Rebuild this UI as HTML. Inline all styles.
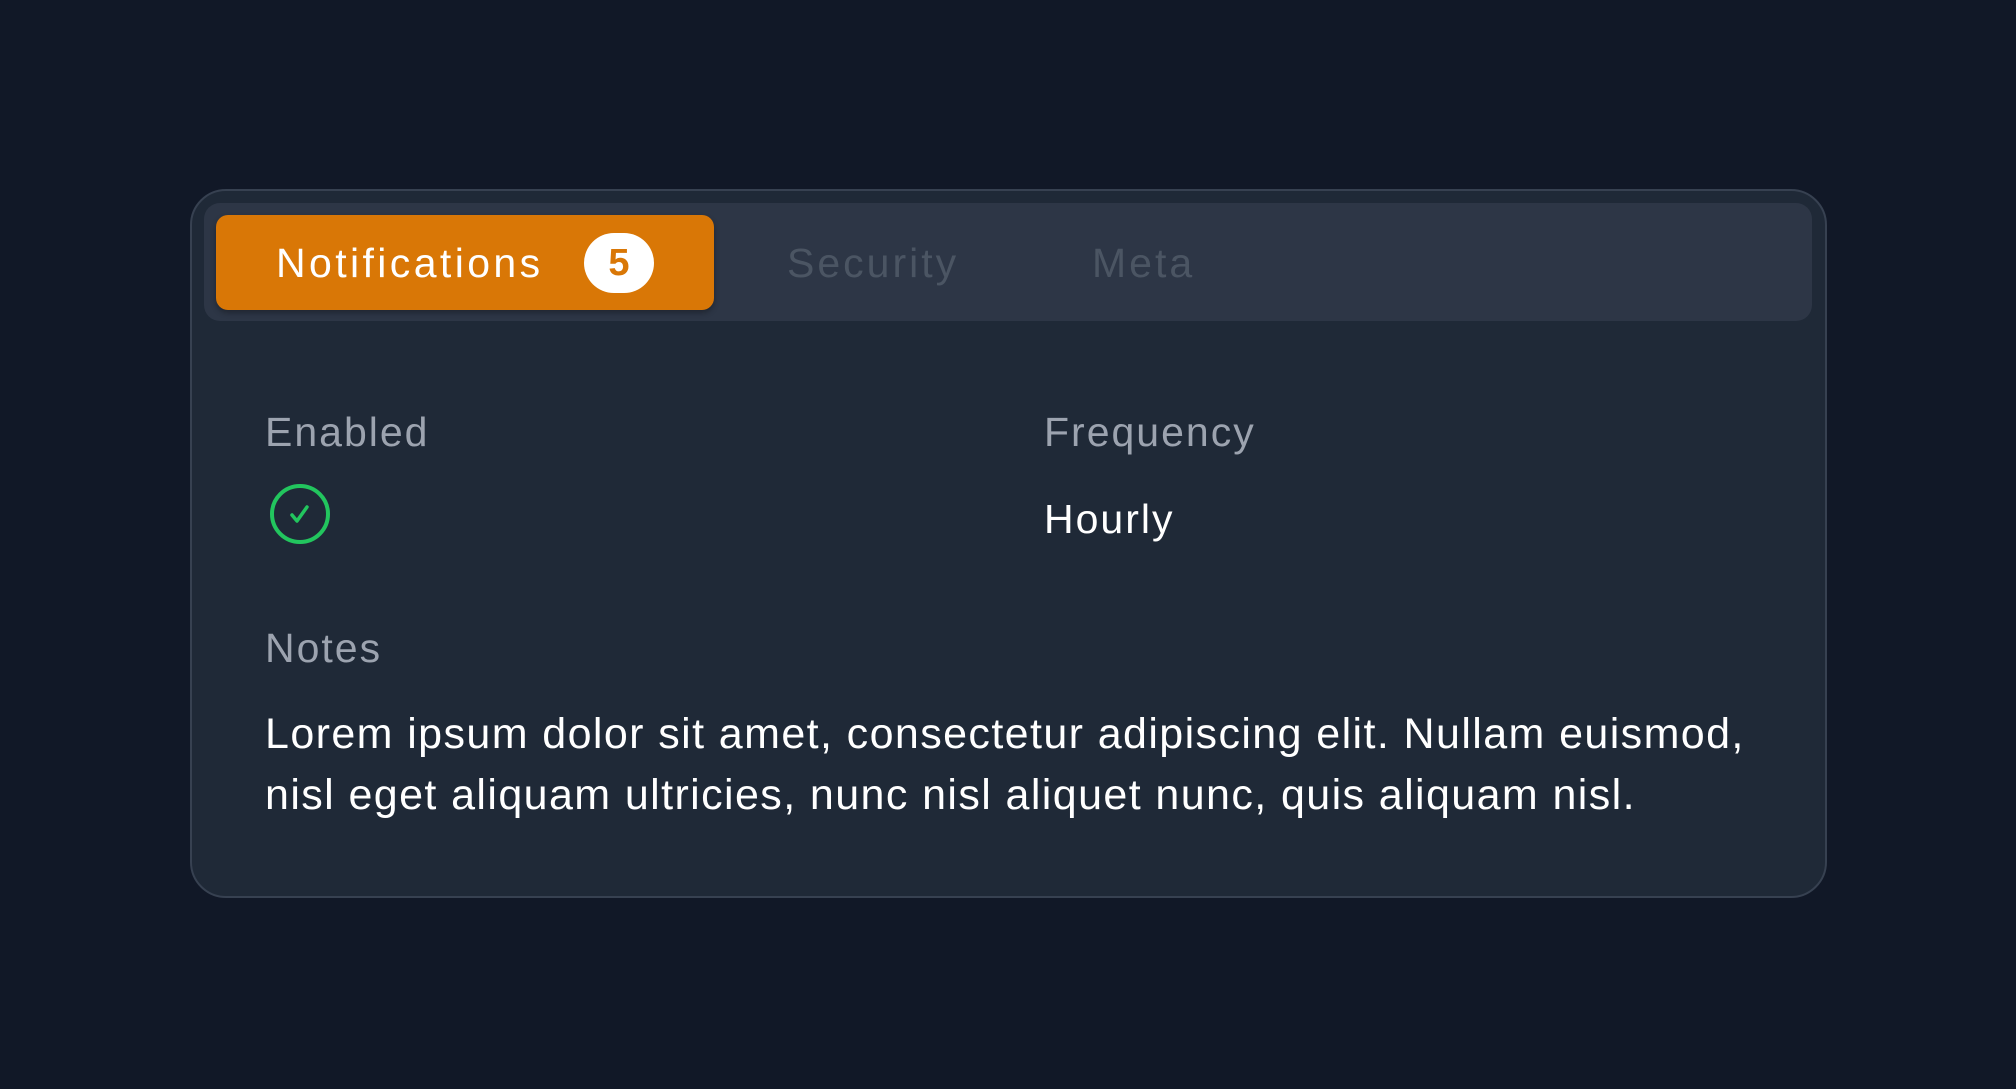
<!DOCTYPE html>
<html><head><style>
body{margin:0;width:2016px;height:1089px;background:#111827;font-family:"Liberation Sans",sans-serif;position:relative;overflow:hidden}
.card{position:absolute;left:190px;top:189px;width:1637px;height:709px;background:#1f2937;border:2px solid #374151;border-radius:36px;box-sizing:border-box}
.bar{position:absolute;left:204px;top:203px;width:1608px;height:118px;background:#2d3646;border-radius:16px}
.tab{position:absolute;left:216px;top:215px;width:498px;height:95px;background:#d97706;border-radius:12px;box-shadow:0 3px 6px rgba(0,0,0,.3)}
.t{position:absolute;font-size:41px;line-height:1;white-space:nowrap;letter-spacing:2px}
.badge{position:absolute;left:584px;top:233px;width:70px;height:60px;border-radius:30px;background:#fff;color:#d97706;font-size:38px;text-align:center;line-height:60px;font-weight:bold}
</style></head><body>
<div class="card"></div>
<div class="bar"></div>
<div class="tab"></div>
<div class="t" style="left:276px;top:243px;color:#fff;letter-spacing:3.4px">Notifications</div>
<div class="badge">5</div>
<div class="t" style="left:787px;top:243px;color:#4b5563;letter-spacing:3px">Security</div>
<div class="t" style="left:1092px;top:243px;color:#4b5563;letter-spacing:3px">Meta</div>
<div class="t" style="left:265px;top:412px;color:#9ca3af">Enabled</div>
<svg style="position:absolute;left:268px;top:482px" width="64" height="64" viewBox="0 0 64 64"><circle cx="32" cy="32" r="28" fill="none" stroke="#22c55e" stroke-width="4"/><path d="M24 33 L29 39 L39 25" fill="none" stroke="#22c55e" stroke-width="3.5" stroke-linecap="round" stroke-linejoin="round"/></svg>
<div class="t" style="left:1044px;top:412px;color:#9ca3af">Frequency</div>
<div class="t" style="left:1044px;top:499px;color:#fff">Hourly</div>
<div class="t" style="left:265px;top:628px;color:#9ca3af">Notes</div>
<div class="t" style="left:265px;top:704px;color:#fff;font-size:43px;letter-spacing:1.4px;line-height:61px">Lorem ipsum dolor sit amet, consectetur adipiscing elit. Nullam euismod,<br>nisl eget aliquam ultricies, nunc nisl aliquet nunc, quis aliquam nisl.</div>
</body></html>
